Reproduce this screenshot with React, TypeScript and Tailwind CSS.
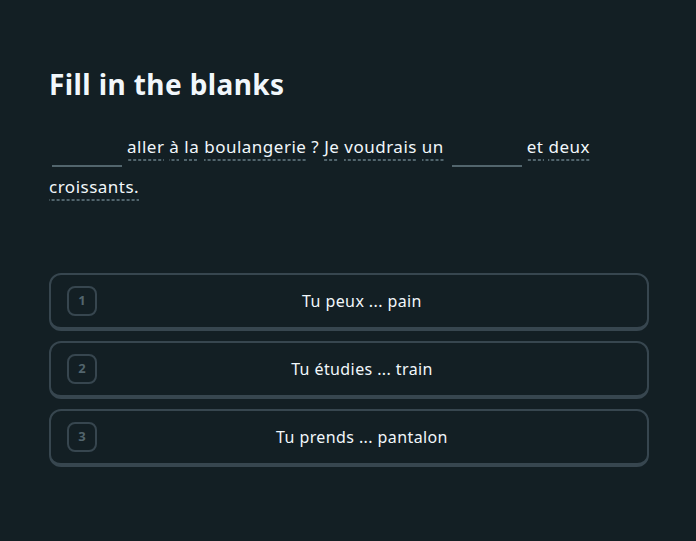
import React from 'react';

type Token = { kind: 'word'; text: string } | { kind: 'blank' } | { kind: 'plain'; text: string };

const sentence: Token[] = [
  { kind: 'blank' },
  { kind: 'word', text: 'aller' },
  { kind: 'word', text: 'à' },
  { kind: 'word', text: 'la' },
  { kind: 'word', text: 'boulangerie' },
  { kind: 'plain', text: '?' },
  { kind: 'word', text: 'Je' },
  { kind: 'word', text: 'voudrais' },
  { kind: 'word', text: 'un' },
  { kind: 'blank' },
  { kind: 'word', text: 'et' },
  { kind: 'word', text: 'deux' },
  { kind: 'word', text: 'croissants.' },
];

const choices = ['Tu peux ... pain', 'Tu étudies ... train', 'Tu prends ... pantalon'];

function Blank() {
  return <span className="inline-block w-[70px] h-[8px] ml-[3px] mr-[5px] border-b-2 border-[#52656d] align-[-14px]" />;
}

export default function App() {
  return (
    <div className="min-h-[541px] w-full bg-[#131f24] text-[#f1f7fb] font-['Noto_Sans',sans-serif]">
      <div className="px-[49px] pt-[66px]">
        <h1 className="text-[28px] leading-[36px] font-bold tracking-[0.4px]">Fill in the blanks</h1>

        <p className="mt-[25px] text-[17px] leading-[39px] tracking-[0.5px] w-[560px]">
          {sentence.map((t, i) => {
            if (t.kind === 'blank') return <Blank key={i} />;
            if (t.kind === 'plain') return <span key={i}>{t.text} </span>;
            return (
              <React.Fragment key={i}>
                <span className="pb-[3px] bg-[linear-gradient(to_right,#52656d_60%,transparent_0)] bg-[length:5px_2px] bg-repeat-x bg-bottom">
                  {t.text}
                </span>{' '}
              </React.Fragment>
            );
          })}
        </p>

        <div className="mt-[67px] flex flex-col gap-[10px] w-[600px]">
          {choices.map((c, i) => (
            <button
              key={c}
              className="relative flex items-center h-[58px] rounded-[12px] border-2 border-b-4 border-[#37464f] px-[16px]"
            >
              <span className="w-[30px] h-[30px] rounded-[8px] border-2 border-[#37464f] flex items-center justify-center text-[13px] font-bold text-[#52656d]">
                {i + 1}
              </span>
              <span className="flex-1 text-center text-[16px] tracking-[0.4px] pr-[4px]">{c}</span>
            </button>
          ))}
        </div>
      </div>
    </div>
  );
}
